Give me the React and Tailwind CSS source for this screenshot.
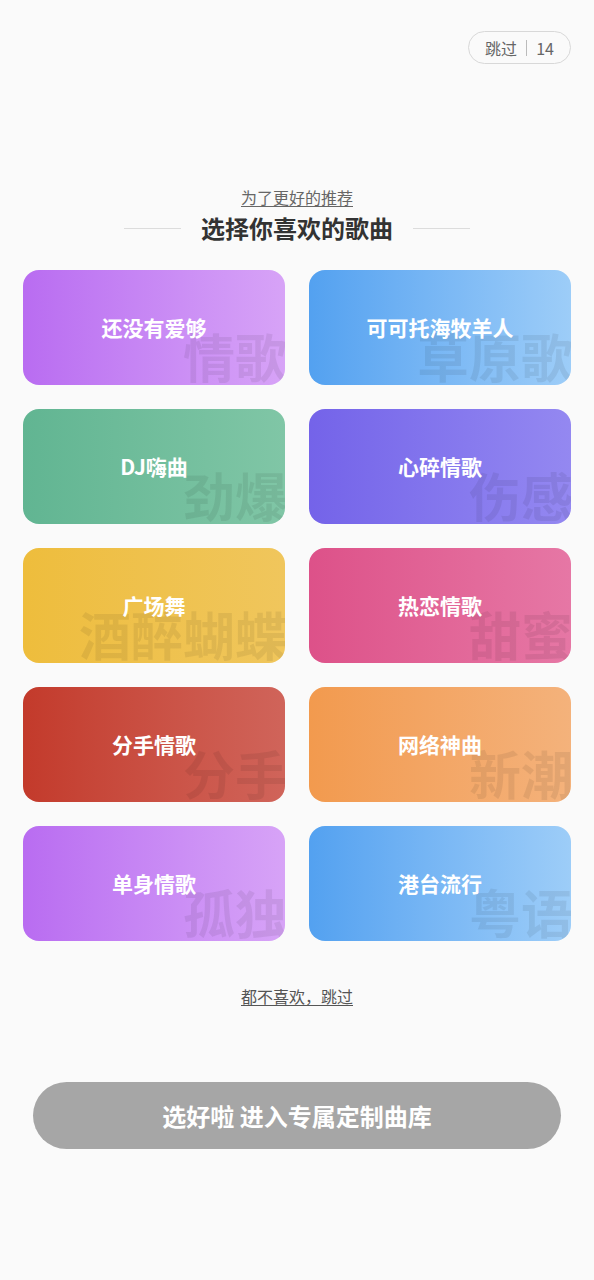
import React from 'react';

const genres = [
    { name: "还没有爱够", mark: "情歌", bg: "bg-gradient-to-r from-[#b96cf1] to-[#d7a3f7]" },
    { name: "可可托海牧羊人", mark: "草原歌", bg: "bg-gradient-to-r from-[#53a1f0] to-[#9dcdf8]" },
    { name: "DJ嗨曲", mark: "劲爆", bg: "bg-gradient-to-r from-[#61b592] to-[#80c6a6]" },
    { name: "心碎情歌", mark: "伤感", bg: "bg-gradient-to-r from-[#7463e9] to-[#9488f1]" },
    { name: "广场舞", mark: "酒醉蝴蝶", bg: "bg-gradient-to-r from-[#eebd3c] to-[#f0c65c]" },
    { name: "热恋情歌", mark: "甜蜜", bg: "bg-gradient-to-r from-[#dd5189] to-[#e677a5]" },
    { name: "分手情歌", mark: "分手", bg: "bg-gradient-to-r from-[#c33a2b] to-[#d0645a]" },
    { name: "网络神曲", mark: "新潮", bg: "bg-gradient-to-r from-[#f29a4e] to-[#f4b27b]" },
    { name: "单身情歌", mark: "孤独", bg: "bg-gradient-to-r from-[#b96cf1] to-[#d7a3f7]" },
    { name: "港台流行", mark: "粤语", bg: "bg-gradient-to-r from-[#53a1f0] to-[#9dcdf8]" },
];

export default function App() {
    return (
        <div
            className="w-full min-h-[1280px] bg-[#fafafa] flex flex-col"
            style={{ fontFamily: '"Noto Sans CJK SC", "Noto Sans", sans-serif' }}
        >
            {/* skip pill */}
            <div className="flex justify-end pt-[31px] pr-[23px]">
                <div className="h-[33px] w-[103px] rounded-full border border-[#d8d8d8] flex items-center justify-center gap-[9px] text-[16px] text-[#666]">
                    <span>跳过</span>
                    <span className="w-px h-[16px] bg-[#bbb]" />
                    <span>14</span>
                </div>
            </div>

            <p className="mt-[122px] text-center text-[16px] leading-[22px] text-[#666] underline underline-offset-2">
                为了更好的推荐
            </p>
            <div className="mt-[5px] flex items-center justify-center gap-[20px]">
                <span className="w-[57px] h-px bg-[#dcdcdc]" />
                <h1 className="text-[24px] leading-[30px] font-bold text-[#333]">选择你喜欢的歌曲</h1>
                <span className="w-[57px] h-px bg-[#dcdcdc]" />
            </div>

            {/* genre cards */}
            <div className="mt-[27px] px-[23px] grid grid-cols-2 gap-x-[24px] gap-y-[24px]">
                {genres.map((g) => (
                    <div
                        key={g.name}
                        className={`relative h-[115px] rounded-[16px] overflow-hidden flex items-center justify-center ${g.bg}`}
                    >
                        <span className="absolute right-[-2px] bottom-[3px] text-[52px] leading-[52px] font-bold text-black/[0.07] whitespace-nowrap">
                            {g.mark}
                        </span>
                        <span className="relative text-white text-[21px] font-bold">{g.name}</span>
                    </div>
                ))}
            </div>

            <p className="mt-[44px] text-center text-[16px] leading-[22px] text-[#555] underline underline-offset-2">
                都不喜欢，跳过
            </p>

            <div className="mt-[75px] px-[33px]">
                <button className="w-full h-[67px] rounded-full bg-[#a6a6a6] text-white text-[24px] font-bold">
                    选好啦 进入专属定制曲库
                </button>
            </div>
        </div>
    );
}
